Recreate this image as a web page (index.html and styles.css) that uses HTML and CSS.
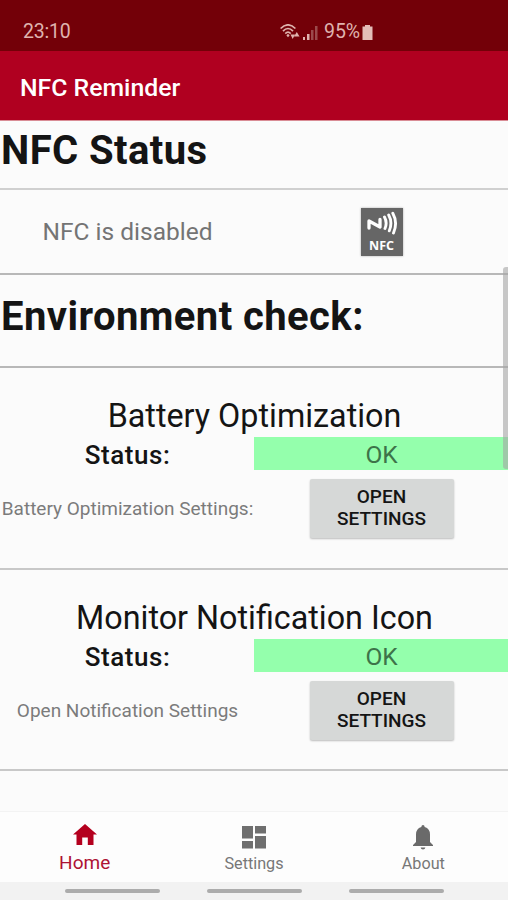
FILE: index.html
```
<!DOCTYPE html>
<html lang="en">
<head>
<meta charset="utf-8">
<title>NFC Reminder</title>
<link rel="stylesheet" href="styles.css">
</head>
<body>
<div class="screen">
  <div class="statusbar">
    <span class="clock">23:10</span>
    <div class="indicators">
      <svg class="wifi" width="20" height="16" viewBox="0 0 20 16" fill="none" stroke="#dfb3ae" stroke-width="1.7">
        <path d="M.6 4.500Q8-2.800 15.400 4.500M3 7.200Q8 1.800 13 7.200M5.300 9.600Q8 6.800 10.700 9.600"/>
        <path d="M8 9.800l1.600 1.700L8 13.200 6.400 11.500zM10.500 10.500h4.500L12.700 15zM14 12.500h5.500L16.800 8z" fill="#dfb3ae" stroke="none"/>
      </svg>
      <svg class="signal" width="15" height="14" viewBox="0 0 15 14">
        <path d="M0 11h2v3H0zM4 8h2.500v6H4z" fill="#dfb3ae"/>
        <path d="M8 4h2.500v10H8zM12 0h2.500v14H12z" fill="#9b4a4c"/>
      </svg>
      <span class="percent">95%</span>
      <svg class="battery" width="11" height="15" viewBox="0 0 11 15">
        <path d="M3 0h5v1.500h2.500V15H.5V1.500H3z" fill="#e3bdb8"/>
      </svg>
    </div>
  </div>
  <header class="appbar"><span class="apptitle">NFC Reminder</span></header>
  <main class="content">
    <h1 class="heading heading-status"><span>NFC Status</span></h1>
    <section class="nfc">
      <div class="cell"><span class="nfc-label">NFC is disabled</span></div>
      <div class="cell">
        <div class="nfc-icon">
          <svg width="32" height="28" viewBox="0 0 32 28" fill="none" stroke="#fff" stroke-width="2.900" stroke-linecap="round">
            <path d="M3 20V13l11 6V11.500" stroke-width="3.300" stroke-linejoin="round"/>
            <path d="M18.500 9Q21.500 14.500 19 20.500M22.700 7Q26.800 14.500 23.300 22.800M26.800 5.200Q32 14.500 27.500 25"/>
          </svg>
          <span class="nfc-word">NFC</span>
        </div>
      </div>
    </section>
    <h1 class="heading heading-env"><span>Environment check:</span></h1>
    <section class="check">
      <h2 class="check-title">Battery Optimization</h2>
      <div class="row"><div class="cell"><span class="state">Status:</span></div><div class="cell ok"><span>OK</span></div></div>
      <div class="row action">
        <div class="cell"><span class="hint">Battery Optimization Settings:</span></div>
        <div class="cell"><button class="open">OPEN<br>SETTINGS</button></div>
      </div>
    </section>
    <section class="check check-last">
      <h2 class="check-title">Monitor Notification Icon</h2>
      <div class="row"><div class="cell"><span class="state">Status:</span></div><div class="cell ok"><span>OK</span></div></div>
      <div class="row action">
        <div class="cell"><span class="hint">Open Notification Settings</span></div>
        <div class="cell"><button class="open">OPEN<br>SETTINGS</button></div>
      </div>
    </section>
    <div class="scrollbar"></div>
  </main>
  <nav class="tabs">
    <a class="tab active">
      <svg width="24" height="22" viewBox="0 0 24 22" fill="#b4001e"><path d="M12 .5L24 11h-3.500v10.500h-5.700V14H9.200v7.500H3.500V11H0z"/></svg>
      <span>Home</span>
    </a>
    <a class="tab">
      <svg width="24" height="23" viewBox="0 0 24 23" fill="#6f6f6f"><path d="M0 0h11v12.500H0zM13 0h11v7.500H13zM0 15h11v7.500H0zM13 10h11v12.500H13z"/></svg>
      <span>Settings</span>
    </a>
    <a class="tab">
      <svg width="20" height="25" viewBox="0 0 20 25" fill="#6a6a6a"><path d="M10 0Q11.500 0 11.700 2Q17 3.500 17 9.500V17l3 3v1H0v-1l3-3V9.500Q3 3.500 8.300 2Q8.500 0 10 0zM7.600 22.500h4.800Q12 24.500 10 24.500T7.600 22.500z"/></svg>
      <span>About</span>
    </a>
  </nav>
  <div class="gestures"><i></i><i></i><i></i></div>
</div>
</body>
</html>
```
FILE: styles.css
```
* { box-sizing: border-box; }
body { margin: 0; font-family: Roboto, sans-serif; color: #141414; background: #fbfbfb; }
.screen { width: 508px; height: 900px; display: flex; flex-direction: column; overflow: hidden; }

.statusbar { height: 51px; background: #730008; display: flex; padding: 14px 135px 0 23px; justify-content: space-between; color: #dfb3ae; font-size: 19.500px; line-height: 36px; }
.clock { letter-spacing: -.2px; }
.indicators { display: flex; align-items: center; height: 36px; }
.signal { margin: 1px 6px 0 3px; }
.percent { letter-spacing: -.1px; }
.battery { margin-left: 2px; }
.appbar { height: 70px; background: #b00020; border-bottom: 1px solid #d98c95; padding-left: 20px; display: flex; align-items: center; color: #fff; }
.apptitle { font-size: 24.800px; font-weight: 500; padding-top: 4px; }

.content { position: relative; height: 690px; display: flex; flex-direction: column; }
.heading { margin: 0; padding-left: 1px; font-size: 40px; font-weight: 700; line-height: 48px; letter-spacing: .42px; white-space: nowrap; border-bottom: 2px solid #d0d0d0; }
.heading-status { height: 69px; padding-top: 6px; }
.heading-env { height: 93px; padding-top: 18px; border-color: #b8b8b8; }
.nfc { height: 85px; display: grid; grid-template-columns: 1fr 1fr; border-bottom: 2px solid #b8b8b8; }
.cell { display: flex; align-items: center; justify-content: center; white-space: nowrap; }
.nfc-label { font-size: 24.500px; color: #747474; padding-left: 1px; }
.nfc-icon { width: 42px; height: 48px; margin-left: 1px; background: #666; display: flex; flex-direction: column; align-items: center; color: #fff; box-shadow: 0 0 2px #aaa; }
.nfc-word { font: 700 12.500px/13px "Open Sans", sans-serif; margin-top: 3px; }

.check { height: 202px; padding-top: 26px; border-bottom: 2px solid #c8c8c8; }
.check-last { height: 201px; }
.check-title { margin: 0; height: 43px; font-size: 32.300px; line-height: 44px; font-weight: 400; text-align: center; white-space: nowrap; padding-left: 1px; }
.row { display: grid; grid-template-columns: 254px 254px; height: 33px; }
.state { font-size: 26px; font-weight: 500; letter-spacing: .55px; padding: 2px 0 0 1px; }
.ok { background: #94ffac; color: #3d7349; font-size: 24.500px; padding: 2px 0 0 1px; }
.action { height: 76px; }
.hint { font-size: 19px; color: #7b7b7b; padding-left: 1px; }
.open { width: 144px; height: 59px; border: 0; border-radius: 2px; background: #d6d8d7; box-shadow: 0 1px 2px #bbb; font: 500 19px/22px Roboto, sans-serif; color: #141414; padding: 0; margin-left: 1px; }
.scrollbar { position: absolute; right: 0; top: 146px; width: 5px; height: 202px; background: rgba(165,165,165,.6); border-radius: 3px 0 0 3px; }

.tabs { height: 71px; border-top: 1px solid #f3f3f3; background: #fdfdfd; display: grid; grid-template-columns: 1fr 1fr 1fr; }
.tab { display: flex; flex-direction: column; align-items: center; padding-top: 13px; color: #777; font-size: 16.200px; line-height: 22px; }
.tab svg { height: 25px; }
.tab span { margin-top: 3px; }
.active { color: #ad1234; font-size: 19px; padding-top: 10px; }
.active span { margin-top: 5px; }
.gestures { height: 18px; background: #f2f2f2; display: flex; justify-content: center; gap: 47px; padding-top: 7px; }
.gestures i { width: 95px; height: 4px; border-radius: 2px; background: #acacac; }
```
